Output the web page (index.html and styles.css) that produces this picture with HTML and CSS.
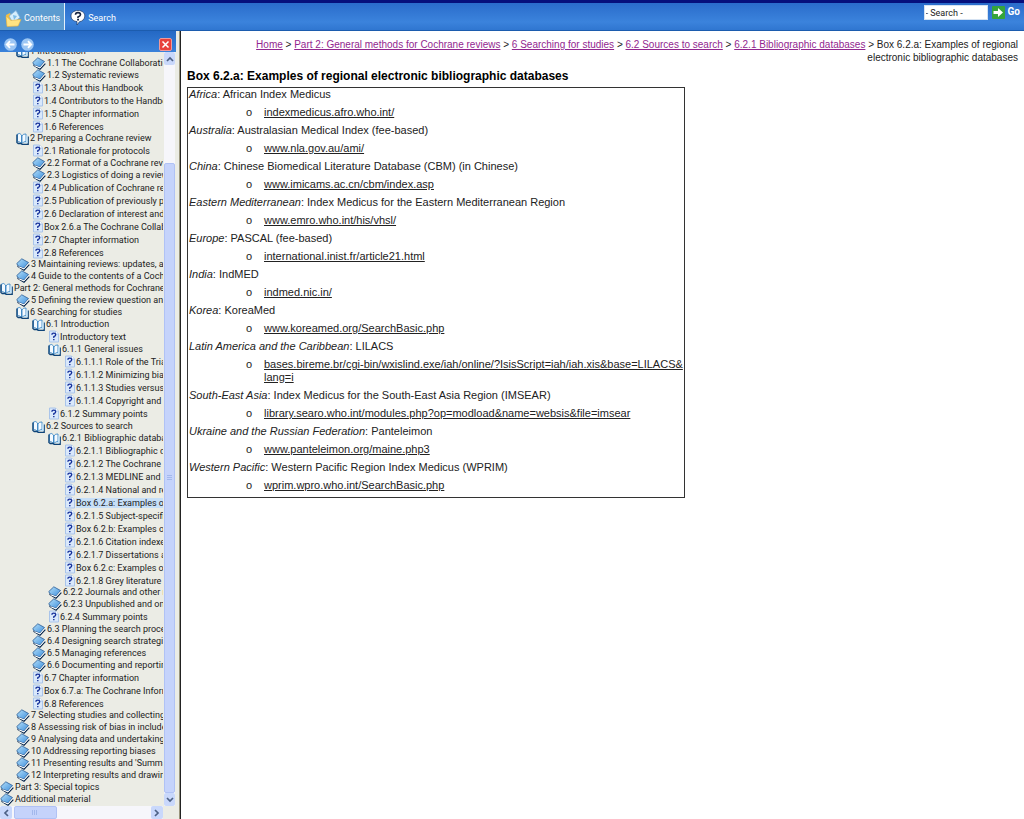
FILE: index.html
```html
<!DOCTYPE html>
<html lang="en">
<head>
<meta charset="utf-8">
<title>Box 6.2.a: Examples of regional electronic bibliographic databases</title>
<link rel="stylesheet" href="styles.css">
</head>
<body>
<svg class="defs" aria-hidden="true">
  <defs>
    <linearGradient id="cover" x1="0" y1="0" x2="1" y2="1"><stop offset="0" stop-color="#b4e0fa"/><stop offset="1" stop-color="#3f8fdc"/></linearGradient>
    <symbol id="closed" viewBox="0 0 14 13"><path d="M.8 5.500 5.800.8 12.500 4.500 8 10 2 8z" fill="url(#cover)" stroke="#2a5c96" stroke-width=".8"/><path d="M1.500 8.300 8 12.200 13.300 6.500" fill="none" stroke="#0d2b50" stroke-width="1.300"/><path d="M2.500 8.700 8 10.900 12.800 5.600" fill="none" stroke="#fff"/></symbol>
    <symbol id="open" viewBox="0 0 14 13"><path d="M1.500 2q2.500-1.500 4 1v8.500Q4 9.500 1.500 9.500zM6 4q1-2.500 4-2v7.500Q7 9.500 6 11.500z" fill="#f4faff" stroke="#2b7cc0" stroke-width=".8"/><path d="M.9 2.500v8l1.300 1h3l1 1h6V4.500" fill="none" stroke="#0f4478" stroke-width="1.300"/><path d="M10.500 3.500h1.200v7.500H7.500l2.500-1.200z" fill="#bfe2fa"/></symbol>
    <symbol id="page" viewBox="0 0 10 12"><path d="M.5.5h6l3 3v8h-9z" fill="#d9e8fb" stroke="#a9c4ea"/><path d="M6.500.5v3h3" fill="#fff" stroke="#a9c4ea"/><path d="M2.900 4.300q0-1.700 1.900-1.700t1.900 1.600Q6.700 5.300 4.800 6.200v1.200" fill="none" stroke="#16309a" stroke-width="1.300"/><path d="M4.100 8.400h1.400v1.400H4.100z" fill="#16309a"/></symbol>
  </defs>
</svg>
<header class="toolbar">
  <button class="tab tab-active"><svg width="17" height="18" viewBox="0 0 17 18"><path d="M1 6 5 4l1 2 7 1 1 9-12 1z" fill="#f3bf45"/><path d="m4 7 7-5.500 4 7L8 14z" fill="#d7eefc" stroke="#7fb0dc" stroke-width=".8"/><path d="m8 6 4 1-3 4z" fill="#7dbce8"/><path d="m1 7 5 4.500 10-1-3 6.500-11 .5z" fill="#ffe382" stroke="#e9b13c" stroke-width=".6"/></svg>Contents</button>
  <button class="tab"><svg width="16" height="18" viewBox="0 0 16 18"><path d="M8 1.500c4 0 6.800 2.300 6.800 5.500S12 12.500 9.500 12.700L7 16v-3.400C3 12 1 10 1 7c0-3.200 3-5.500 7-5.500z" fill="#fff" stroke="#1b3763" stroke-width=".7"/><path d="M5.500 5.800q0-2.200 2.500-2.200t2.500 2.200Q10.500 7 8 8v1" fill="none" stroke="#17233f" stroke-width="1.600"/><path d="M7.100 9.800H9v1.600H7.100z" fill="#17233f"/></svg>Search</button>
  <form class="quick">
    <input type="text" value="- Search -" aria-label="Search">
    <button type="button" class="go"><svg width="13" height="13" viewBox="0 0 13 13"><rect width="13" height="13" rx="1" fill="#35a43a"/><path d="M1.500 5h4.500V2l5 4.500-5 4.500V8H1.500z" fill="#fff"/></svg>Go</button>
  </form>
</header>
<div class="panes">
  <aside class="side">
    <div class="side-head">
      <button class="nav" aria-label="Back"><svg width="13" height="13" viewBox="0 0 13 13"><circle cx="6.500" cy="6.500" r="6.300" fill="#9cc6f4"/><path d="M10.500 6.500H3M6 3.200 2.800 6.500 6 9.800" fill="none" stroke="#fff" stroke-width="1.800"/></svg></button>
      <button class="nav" aria-label="Forward"><svg width="13" height="13" viewBox="0 0 13 13"><circle cx="6.500" cy="6.500" r="6.300" fill="#9cc6f4"/><path d="M2.500 6.500H10M7 3.200l3.200 3.300L7 9.800" fill="none" stroke="#fff" stroke-width="1.800"/></svg></button>
      <button class="close" aria-label="Close"><svg width="13" height="13" viewBox="0 0 13 13"><rect x=".5" y=".5" width="12" height="12" rx="1.500" fill="#e8403c" stroke="#f09a9a"/><path d="m3.500 3.500 6 6m0-6-6 6" stroke="#fff" stroke-width="1.500"/></svg></button>
    </div>
    <div class="side-body">
      <nav class="tree-view" aria-label="Contents">
        <ul class="tree" id="tree"></ul>
      </nav>
      <div class="vbar">
        <span class="arrow"><svg width="8" height="6" viewBox="0 0 8 6"><path d="m1 5 3-3 3 3" fill="none" stroke="#4d6185" stroke-width="1.700"/></svg></span>
        <span class="space"></span>
        <span class="thumb"><svg width="5" height="6" viewBox="0 0 5 6"><path d="M0 .5h5M0 2.500h5M0 4.500h5" stroke="#a3b8ec"/></svg></span>
        <span class="arrow"><svg width="8" height="6" viewBox="0 0 8 6"><path d="m1 1 3 3 3-3" fill="none" stroke="#4d6185" stroke-width="1.700"/></svg></span>
      </div>
      <div class="hbar">
        <span class="arrow"><svg width="6" height="8" viewBox="0 0 6 8"><path d="M5 1 2 4l3 3" fill="none" stroke="#4d6185" stroke-width="1.700"/></svg></span>
        <span class="thumb"><svg width="6" height="5" viewBox="0 0 6 5"><path d="M.5 0v5M2.500 0v5M4.500 0v5" stroke="#a3b8ec"/></svg></span>
        <span class="space"></span>
        <span class="arrow"><svg width="6" height="8" viewBox="0 0 6 8"><path d="m1 1 3 3-3 3" fill="none" stroke="#4d6185" stroke-width="1.700"/></svg></span>
      </div>
    </div>
  </aside>
  <main class="content">
    <nav class="crumbs" aria-label="Breadcrumb"><a href="#">Home</a> &gt; <a href="#">Part 2: General methods for Cochrane reviews</a> &gt; <a href="#">6 Searching for studies</a> &gt; <a href="#">6.2 Sources to search</a> &gt; <a href="#">6.2.1 Bibliographic databases</a> &gt; Box 6.2.a: Examples of regional electronic bibliographic databases</nav>
    <h1>Box 6.2.a: Examples of regional electronic bibliographic databases</h1>
    <div class="box">
      <p><em>Africa</em>: African Index Medicus</p>
      <ul><li><a href="#">indexmedicus.afro.who.int/</a></li></ul>
      <p><em>Australia</em>: Australasian Medical Index (fee-based)</p>
      <ul><li><a href="#">www.nla.gov.au/ami/</a></li></ul>
      <p><em>China</em>: Chinese Biomedical Literature Database (CBM) (in Chinese)</p>
      <ul><li><a href="#">www.imicams.ac.cn/cbm/index.asp</a></li></ul>
      <p><em>Eastern Mediterranean</em>: Index Medicus for the Eastern Mediterranean Region</p>
      <ul><li><a href="#">www.emro.who.int/his/vhsl/</a></li></ul>
      <p><em>Europe</em>: PASCAL (fee-based)</p>
      <ul><li><a href="#">international.inist.fr/article21.html</a></li></ul>
      <p><em>India</em>: IndMED</p>
      <ul><li><a href="#">indmed.nic.in/</a></li></ul>
      <p><em>Korea</em>: KoreaMed</p>
      <ul><li><a href="#">www.koreamed.org/SearchBasic.php</a></li></ul>
      <p><em>Latin America and the Caribbean</em>: LILACS</p>
      <ul><li><a href="#">bases.bireme.br/cgi-bin/wxislind.exe/iah/online/?IsisScript=iah/iah.xis&amp;base=LILACS&amp;<br>lang=i</a></li></ul>
      <p><em>South-East Asia</em>: Index Medicus for the South-East Asia Region (IMSEAR)</p>
      <ul><li><a href="#">library.searo.who.int/modules.php?op=modload&amp;name=websis&amp;file=imsear</a></li></ul>
      <p><em>Ukraine and the Russian Federation</em>: Panteleimon</p>
      <ul><li><a href="#">www.panteleimon.org/maine.php3</a></li></ul>
      <p><em>Western Pacific</em>: Western Pacific Region Index Medicus (WPRIM)</p>
      <ul><li><a href="#">wprim.wpro.who.int/SearchBasic.php</a></li></ul>
    </div>
  </main>
</div>
<script src="tree.js"></script>
</body>
</html>
```

FILE: styles.css
```css
* { box-sizing: border-box; }
body {
  margin: 0;
  height: 100vh;
  display: flex;
  flex-direction: column;
  overflow: hidden;
  background: #fff;
  color: #222;
  font-family: "Liberation Sans", Arial, sans-serif;
  font-size: 11px;
}
.defs { position: absolute; width: 0; height: 0; }
button { margin: 0; padding: 0; border: 0; background: none; font: inherit; color: inherit; }
svg { display: block; flex: none; }
ul { margin: 0; padding: 0; list-style: none; }

.toolbar {
  flex: none;
  display: flex;
  height: 31px;
  border-top: 3px solid #06107c;
  border-bottom: 1px solid #1c5cae;
  background: linear-gradient(#2a6ccb, #3b83dc 70%, #2f76d0);
  color: #fff;
  font-family: Roboto, "DejaVu Sans Condensed", sans-serif;
  font-size: 9px;
}
.tab { display: flex; align-items: center; gap: 2px; padding: 2px 4px 0 5px; }
.tab-active { background: #5c9bd0; border-right: 1px solid #e4f0fa; }
.quick { display: flex; align-items: flex-start; gap: 4px; margin: 2px 4px 0 auto; }
.quick input {
  width: 64px;
  height: 15px;
  border: 1px solid #d5e2f2;
  padding: 0 1px;
  background: #fff;
  color: #222;
  font: 9px Roboto, "DejaVu Sans Condensed", sans-serif;
}
.go { display: flex; align-items: center; gap: 3px; font-weight: bold; font-size: 10px; line-height: 14px; }

.panes { flex: 1; display: flex; min-height: 0; }
.side {
  flex: none;
  width: 181px;
  display: flex;
  flex-direction: column;
  padding-right: 4px;
  border-right: 1px solid #222;
  background: linear-gradient(to left, #98947c 1px, #ebece5 1px);
}
.side-head {
  flex: none;
  display: flex;
  align-items: center;
  gap: 4px;
  height: 21px;
  padding: 5px 4px 0;
  background: linear-gradient(#2468c4, #3a82da);
}
.close { margin-left: auto; }
.side-body {
  flex: 1;
  min-height: 0;
  display: grid;
  grid-template: minmax(0, 1fr) 13px / minmax(0, 1fr) 11px;
  padding: 0 1px 0 0;
}
.tree-view { overflow: hidden; margin-right: 1px; }
.tree {
  margin-top: -7px;
  font-family: Roboto, "DejaVu Sans Condensed", sans-serif;
  font-size: 9px;
  color: #222;
}
.tree ul { padding-left: 16px; }
.tree .tight { margin-bottom: -1px; }
.row { display: flex; align-items: center; gap: 1px; height: 12px; color: inherit; text-decoration: none; white-space: nowrap; }
.row svg { width: 14px; height: 13px; }
.branch { gap: 0; }
.leaf { height: 13px; padding-left: 1px; }
.leaf svg { width: 10px; height: 13px; }
.current span { flex: 1; background: #c6dff8; }

.vbar, .hbar { display: flex; background: #f6f6fb; }
.vbar { flex-direction: column; }
.hbar { grid-column: 1 / -1; margin-right: 12px; }
.arrow {
  flex: none;
  display: grid;
  place-items: center;
  width: 12px;
  height: 13px;
  border-radius: 2px;
  background: #c9d8fb;
}
.vbar .arrow { width: 11px; }
.thumb { display: grid; place-items: center; background: #c5d3fb; border: 1px solid #b0c2f5; border-radius: 2px; }
.vbar .space { flex: 98; }
.vbar .thumb { flex: 627; }
.hbar .thumb { flex: 41; margin-left: 2px; }
.hbar .space { flex: 95; }

.content { flex: 1; min-width: 0; padding: 7px 6px 0; }
.crumbs { padding-left: 28px; text-align: right; font-size: 10px; line-height: 13px; }
.crumbs a { color: #92278f; }
h1 { margin: 5px 0 4px; font-size: 12px; line-height: 14px; color: #000; }
.box { max-width: 498px; border: 1px solid #333; }
.box p { margin: 0; padding-left: 1px; line-height: 13px; }
.box ul { margin: 5px 0; padding-left: 58px; line-height: 13px; }
.box li { display: flex; gap: 11px; }
.box li::before { content: "o"; flex: none; width: 7px; }
.box a { color: inherit; white-space: nowrap; }
```

FILE: tree.js
```js
const chapters = [
  ["open", "1 Introduction", [
    ["closed", "1.1 The Cochrane Collaboration"],
    ["closed", "1.2 Systematic reviews"],
    ["page", "1.3 About this Handbook"],
    ["page", "1.4 Contributors to the Handbook"],
    ["page", "1.5 Chapter information"],
    ["page", "1.6 References"]]],
  ["open", "2 Preparing a Cochrane review", [
    ["page", "2.1 Rationale for protocols"],
    ["closed", "2.2 Format of a Cochrane review"],
    ["closed", "2.3 Logistics of doing a review"],
    ["page", "2.4 Publication of Cochrane reviews"],
    ["page", "2.5 Publication of previously published"],
    ["page", "2.6 Declaration of interest and"],
    ["page", "Box 2.6.a The Cochrane Collaboration"],
    ["page", "2.7 Chapter information"],
    ["page", "2.8 References"]]],
  ["closed", "3 Maintaining reviews: updates, amendments"],
  ["closed", "4 Guide to the contents of a Cochrane"]
];
const methods = [
  ["closed", "5 Defining the review question and"],
  ["open", "6 Searching for studies", [
    ["open", "6.1 Introduction", [
      ["page", "Introductory text"],
      ["open", "6.1.1 General issues", [
        ["page", "6.1.1.1 Role of the Trials"],
        ["page", "6.1.1.2 Minimizing bias"],
        ["page", "6.1.1.3 Studies versus"],
        ["page", "6.1.1.4 Copyright and"]]],
      ["page", "6.1.2 Summary points"]]],
    ["open", "6.2 Sources to search", [
      ["open", "6.2.1 Bibliographic databases", [
        ["page", "6.2.1.1 Bibliographic databases"],
        ["page", "6.2.1.2 The Cochrane"],
        ["page", "6.2.1.3 MEDLINE and EMBASE"],
        ["page", "6.2.1.4 National and regional"],
        ["page", "Box 6.2.a: Examples of regional", null, true],
        ["page", "6.2.1.5 Subject-specific"],
        ["page", "Box 6.2.b: Examples of subject"],
        ["page", "6.2.1.6 Citation indexes"],
        ["page", "6.2.1.7 Dissertations and"],
        ["page", "Box 6.2.c: Examples of"],
        ["page", "6.2.1.8 Grey literature"]]],
      ["closed", "6.2.2 Journals and other non"],
      ["closed", "6.2.3 Unpublished and ongoing"],
      ["page", "6.2.4 Summary points"]]],
    ["closed", "6.3 Planning the search process"],
    ["closed", "6.4 Designing search strategies"],
    ["closed", "6.5 Managing references"],
    ["closed", "6.6 Documenting and reporting"],
    ["page", "6.7 Chapter information"],
    ["page", "Box 6.7.a: The Cochrane Information"],
    ["page", "6.8 References"]]],
  ["closed", "7 Selecting studies and collecting data"],
  ["closed", "8 Assessing risk of bias in included"],
  ["closed", "9 Analysing data and undertaking"],
  ["closed", "10 Addressing reporting biases"],
  ["closed", "11 Presenting results and 'Summary"],
  ["closed", "12 Interpreting results and drawing"]
];
const rowClass = { page: "row leaf", open: "row branch", closed: "row" };

function render(items, depth) {
  return items.map(([kind, label, children, current]) => {
    const cls = rowClass[kind] + (current ? " current" : "");
    const tight = children && depth > 0 && children.length > 5;
    const sub = children ? `<ul${tight ? ' class="tight"' : ""}>${render(children, depth + 1)}</ul>` : "";
    return `<li><a class="${cls}" href="#"><svg aria-hidden="true"><use href="#${kind}"/></svg><span>${label}</span></a>${sub}</li>`;
  }).join("");
}

document.getElementById("tree").innerHTML =
  `<li><ul>${render(chapters, 1)}</ul></li>` +
  render([
    ["open", "Part 2: General methods for Cochrane reviews", methods],
    ["closed", "Part 3: Special topics"],
    ["closed", "Additional material"]
  ], 0);
```
